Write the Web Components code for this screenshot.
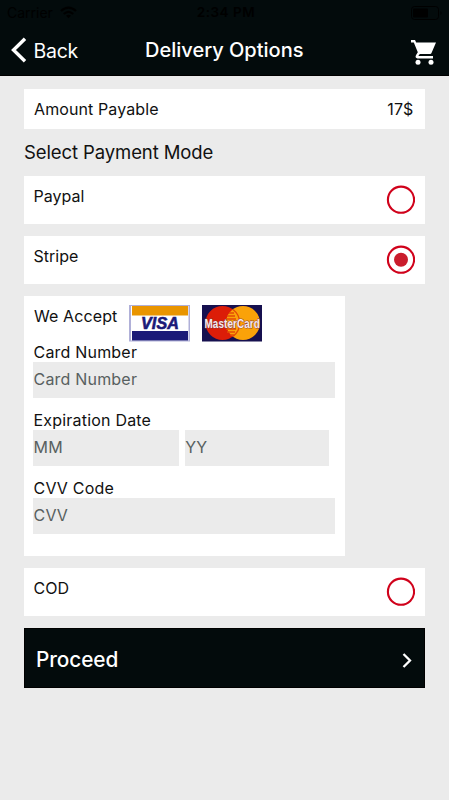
<!DOCTYPE html>
<html lang="en">
<head>
<meta charset="utf-8">
<title>Delivery Options</title>
<style>
  body {
    margin: 0;
    background: #ebebeb;
    font-family: Inter, "Liberation Sans", sans-serif;
    font-size: 16px;
    color: #111;
  }
</style>
</head>
<body>
<delivery-page></delivery-page>
<script>
class StatusBar extends HTMLElement {
  constructor() {
    super();
    this.attachShadow({ mode: "open" }).innerHTML = `
      <style>
        :host {
          display: grid;
          grid-template-columns: 1fr auto 1fr;
          align-items: center;
          height: 25px;
          padding: 0 6px 0 7px;
          box-sizing: border-box;
          font-size: 14px;
          line-height: 25px;
          color: #000;
        }
        .left { display: flex; align-items: center; gap: 7px; }
        .time { padding-left: 2px; font-weight: 600; font-size: 13.5px; letter-spacing: 0.5px; }
        .battery { justify-self: end; }
        svg { display: block; }
      </style>
      <div class="left">
        <span>Carrier</span>
        <svg width="17" height="13" viewBox="0 0 17 13" fill="none" stroke="#000" stroke-width="2.3">
          <path d="M1 5Q8.5-1.8 16 5M3.8 8Q8.5 3.7 13.2 8"/>
          <path d="M6 9.7Q8.5 7.7 11 9.7L8.5 12.2z" fill="#000" stroke="none"/>
        </svg>
      </div>
      <span class="time">2:34 PM</span>
      <svg class="battery" width="32" height="14" viewBox="0 0 32 14">
        <rect x=".5" y=".5" width="27" height="13" rx="3" fill="none" stroke="#000"/>
        <rect x="2" y="2.5" width="15" height="9" rx="1" fill="#000"/>
        <path d="M29.5 5v4q2-2 0-4" fill="#000"/>
      </svg>
    `;
  }
}

class NavBar extends HTMLElement {
  constructor() {
    super();
    this.attachShadow({ mode: "open" }).innerHTML = `
      <style>
        :host {
          display: grid;
          grid-template-columns: 1fr auto 1fr;
          align-items: center;
          height: 50px;
          padding: 0 13.5px 0 11px;
          color: #fff;
        }
        .back { display: flex; align-items: center; gap: 6.5px; font-size: 19.5px; letter-spacing: -0.25px; }
        .back span { padding-top: 1px; }
        .title { padding-left: 2px; font-size: 20px; font-weight: 500; }
        .cart { justify-self: end; margin-top: 5px; }
        svg { display: block; }
      </style>
      <div class="back">
        <svg width="16" height="26" viewBox="0 0 16 26" fill="none" stroke="#fff" stroke-width="3.4">
          <path d="M14 1.7L2.5 13L14 24.3"/>
        </svg>
        <span>Back</span>
      </div>
      <span class="title"><slot></slot></span>
      <svg class="cart" width="25" height="25" viewBox="0 0 25 25" fill="#fff">
        <path d="M0 0h4l1.200 2.500H25l-4.500 10.500q-.4.900-1.300.9H8.800L7.300 16H22v2.500H6.500q-3-.8-1.400-3.400L6.800 12.300 2.800 2.500H0z"/>
        <circle cx="7" cy="22.300" r="2.500"/>
        <circle cx="20" cy="22.300" r="2.500"/>
      </svg>
    `;
  }
}

class AmountRow extends HTMLElement {
  constructor() {
    super();
    this.attachShadow({ mode: "open" }).innerHTML = `
      <style>
        :host {
          display: flex;
          justify-content: space-between;
          height: 39.5px;
          padding: 0 11px 0 10px;
          line-height: 40px;
          letter-spacing: 0.1px;
          background: #fff;
        }
      </style>
      <slot></slot>
      <slot name="value"></slot>
    `;
  }
}

class PaymentOption extends HTMLElement {
  constructor() {
    super();
    this.attachShadow({ mode: "open" }).innerHTML = `
      <style>
        :host {
          display: flex;
          justify-content: space-between;
          height: 48px;
          padding: 0 9.5px 0 9.5px;
          margin-bottom: 12px;
          box-sizing: border-box;
          background: #fff;
        }
        .label { line-height: 40px; }
        svg { display: block; margin-top: 9px; }
        .dot { display: none; }
        :host([checked]) .dot { display: inline; }
      </style>
      <span class="label"><slot></slot></span>
      <svg width="29" height="29" viewBox="0 0 29 29">
        <circle cx="15" cy="14.7" r="13.1" fill="none" stroke="#d0021b" stroke-width="2.1"/>
        <circle class="dot" cx="15" cy="14.7" r="7" fill="#ca1d2d"/>
      </svg>
    `;
  }
}

class CardBrands extends HTMLElement {
  constructor() {
    super();
    this.attachShadow({ mode: "open" }).innerHTML = `
      <style>
        :host { display: flex; gap: 12px; }
        svg { display: block; overflow: visible; }
        text { font-family: "Liberation Sans", Arial, sans-serif; font-weight: bold; }
        .visa { font-style: italic; }
      </style>
      <svg width="61" height="37" viewBox="0 0 61 37">
        <rect width="61" height="36.5" fill="#b0b0d8"/>
        <rect x="2" y="1" width="57.5" height="34.5" fill="#fff"/>
        <rect x="3" y="1" width="56" height="9.5" fill="#e99500"/>
        <rect x="3" y="26" width="56" height="9.5" fill="#1b1a78"/>
        <text class="visa" x="12" y="24.3" font-size="16.5" textLength="38" lengthAdjust="spacingAndGlyphs" fill="#1b1a78" stroke="#1b1a78" stroke-width=".6">VISA</text>
      </svg>
      <svg width="60" height="36.5" viewBox="0 0 60 36.5">
        <rect width="60" height="36.5" fill="#16104f"/>
        <circle cx="20.5" cy="18" r="17" fill="#dc1d08"/>
        <circle cx="41" cy="18" r="17" fill="#faa209"/>
        <path d="M31 4.5A17 17 0 0 1 31 31.5M25 11h8M24 14h10M24 24h10M25 27h8M27 8h5M28 30h5" fill="none" stroke="#e34b06" stroke-width="1.3"/>
        <text transform="translate(2.5 22.5) scale(.9 1.1)" font-size="11" fill="#f4eaf0" stroke="#8a3a3a" stroke-width=".8" paint-order="stroke">MasterCard</text>
      </svg>
    `;
  }
}

class FormField extends HTMLElement {
  constructor() {
    super();
    this.attachShadow({ mode: "open" }).innerHTML = `
      <style>
        :host { display: block; height: 68.2px; letter-spacing: 0.2px; }
        .label { height: 20px; line-height: 20px; padding-left: 0.5px; }
        .inputs { display: flex; gap: 6px; }
      </style>
      <div class="label">${this.getAttribute("label")}</div>
      <div class="inputs"><slot></slot></div>
    `;
  }
}

class TextInput extends HTMLElement {
  constructor() {
    super();
    this.attachShadow({ mode: "open" }).innerHTML = `
      <style>
        :host { display: block; flex: 1; height: 36px; background: #ebebeb; }
        input {
          display: block;
          width: 100%;
          height: 34px;
          padding: 0 0 0 0.5px;
          box-sizing: border-box;
          border: 0;
          background: none;
          font: inherit;
          letter-spacing: inherit;
        }
        input::placeholder { color: #586060; opacity: 1; }
      </style>
      <input type="text" placeholder="${this.getAttribute("placeholder")}">
    `;
  }
}

class CardForm extends HTMLElement {
  constructor() {
    super();
    this.attachShadow({ mode: "open" }).innerHTML = `
      <style>
        :host {
          display: block;
          width: 321px;
          height: 260px;
          padding: 9px 10px 0 9px;
          margin-bottom: 12px;
          box-sizing: border-box;
          background: #fff;
        }
        .accept { display: flex; gap: 12px; height: 37px; line-height: 22px; letter-spacing: 0.1px; padding-left: 1px; }
        form-field .month { flex: 0 0 145.7px; }
        form-field .year { flex: 0 0 144.6px; }
      </style>
      <div class="accept"><span>We Accept</span><card-brands></card-brands></div>
      <form-field label="Card Number">
        <text-input placeholder="Card Number"></text-input>
      </form-field>
      <form-field label="Expiration Date">
        <text-input class="month" placeholder="MM"></text-input>
        <text-input class="year" placeholder="YY"></text-input>
      </form-field>
      <form-field label="CVV Code">
        <text-input placeholder="CVV"></text-input>
      </form-field>
    `;
  }
}

class ProceedButton extends HTMLElement {
  constructor() {
    super();
    this.attachShadow({ mode: "open" }).innerHTML = `
      <style>
        :host {
          display: flex;
          align-items: center;
          justify-content: space-between;
          height: 60px;
          padding: 2px 11.5px 0 11px;
          box-sizing: border-box;
          background: #030b0c;
          border: 1px solid #000;
          color: #fff;
          font-size: 20.8px;
          font-weight: 500;
          letter-spacing: -0.1px;
        }
        svg { display: block; margin-top: 2px; }
      </style>
      <slot></slot>
      <svg width="10" height="15" viewBox="0 0 10 15" fill="none" stroke="#fff" stroke-width="2.3">
        <path d="M1.5 1L8 7.5L1.5 14"/>
      </svg>
    `;
  }
}

class DeliveryPage extends HTMLElement {
  constructor() {
    super();
    this.attachShadow({ mode: "open" }).innerHTML = `
      <style>
        :host { display: block; height: 800px; overflow: hidden; }
        header { height: 76px; box-sizing: border-box; background: #030b0c; border-bottom: 1px solid #000; }
        main { padding: 13px 24.5px 0 24px; }
        h2 { height: 47.5px; margin: 0; font-size: 18.5px; font-weight: 400; line-height: 46.5px; letter-spacing: -0.1px; }
      </style>
      <header>
        <status-bar></status-bar>
        <nav-bar>Delivery Options</nav-bar>
      </header>
      <main>
        <amount-row>Amount Payable<span slot="value">17$</span></amount-row>
        <h2>Select Payment Mode</h2>
        <payment-option>Paypal</payment-option>
        <payment-option checked>Stripe</payment-option>
        <card-form></card-form>
        <payment-option>COD</payment-option>
        <proceed-button>Proceed</proceed-button>
      </main>
    `;
  }
}

customElements.define("status-bar", StatusBar);
customElements.define("nav-bar", NavBar);
customElements.define("amount-row", AmountRow);
customElements.define("payment-option", PaymentOption);
customElements.define("card-brands", CardBrands);
customElements.define("text-input", TextInput);
customElements.define("form-field", FormField);
customElements.define("card-form", CardForm);
customElements.define("proceed-button", ProceedButton);
customElements.define("delivery-page", DeliveryPage);
</script>
</body>
</html>
